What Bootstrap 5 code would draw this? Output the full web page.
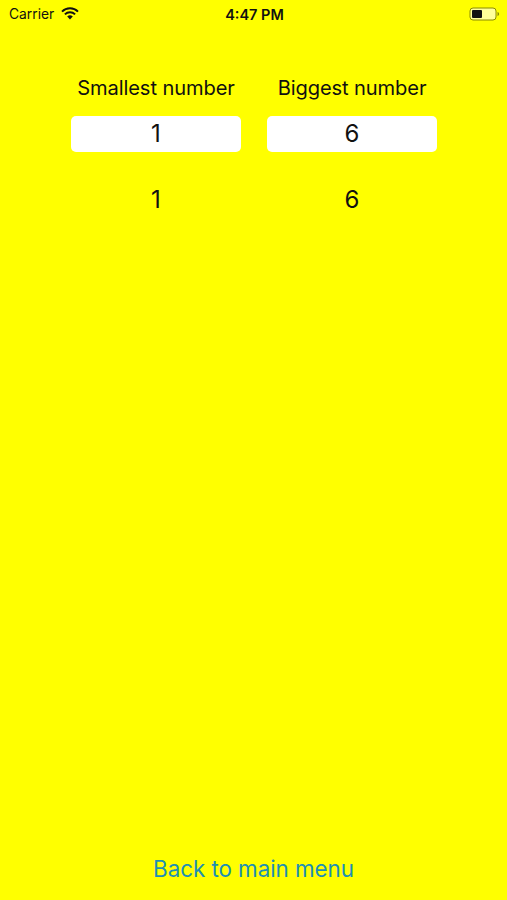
<!DOCTYPE html>
<html lang="en">
<head>
<meta charset="utf-8">
<title>Number range</title>
<link rel="stylesheet" href="https://cdn.jsdelivr.net/npm/bootstrap@5.3.0/dist/css/bootstrap.min.css">
<style>
html, body { margin: 0; height: 900px; overflow: hidden; }
body { background: #ffff00; font-family: Inter, "Liberation Sans", sans-serif; color: #111; }
.screen { height: 900px; }
.status-row { height: 28px; padding: 0 7px 0 9px; font-size: 13.8px; }
.status-side { width: 120px; }
.wifi-icon { margin-left: 3px; margin-top: -2px; }
.status-time { font-weight: 600; font-size: 14.5px; padding-top: 1px; }
.cols { padding: 45px 70px 0 71px; gap: 26px; }
.numcol { width: 170px; }
.cap { font-size: 20.1px; line-height: 30px; white-space: nowrap; letter-spacing: -.1px; }
.numbox { height: 36px; margin-top: 13px; border: 0; border-radius: 5px; background: #fff; color: #111; font-size: 24px; line-height: 36px; padding: 0; text-align: center; box-shadow: none; }
.numout { font-size: 24px; line-height: 36px; margin-top: 30px; }
.backlink { color: #1d8fb4; font-size: 22.4px; line-height: 30px; padding: 0 0 15px; text-decoration: none; letter-spacing: -.05px; }
</style>
</head>
<body>
<div class="screen d-flex flex-column">
  <div class="status-row d-flex align-items-center justify-content-between">
    <div class="status-side d-flex align-items-center gap-1">
      <span>Carrier</span>
      <svg class="wifi-icon" width="18" height="13" viewBox="0 0 18 13" aria-hidden="true"><path d="M1 4.6a11.4 11.4 0 0 1 16 0" fill="none" stroke="#111" stroke-width="2"/><path d="M3.900 7.400a7.300 7.300 0 0 1 10.200 0" fill="none" stroke="#111" stroke-width="2"/><path d="M9 12.400 6.200 9.600a4 4 0 0 1 5.600 0z" fill="#111"/></svg>
    </div>
    <div class="status-time">4:47 PM</div>
    <div class="status-side d-flex justify-content-end">
      <svg width="31" height="14" viewBox="0 0 31 14" aria-hidden="true"><rect x="1" y="1" width="26" height="12" rx="3" fill="#fff" fill-opacity=".6" stroke="#8a8a00" stroke-width="1"/><rect x="3" y="3" width="10" height="8" rx="1" fill="#111"/><path d="M28.500 5v4c1-.3 1.600-1 1.600-2s-.6-1.700-1.600-2z" fill="#8a8a00"/></svg>
    </div>
  </div>
  <div class="cols d-flex">
    <div class="numcol text-center">
      <div class="cap">Smallest number</div>
      <input class="form-control numbox" value="1" aria-label="Smallest number">
      <div class="numout">1</div>
    </div>
    <div class="numcol text-center">
      <div class="cap">Biggest number</div>
      <input class="form-control numbox" value="6" aria-label="Biggest number">
      <div class="numout">6</div>
    </div>
  </div>
  <div class="mt-auto text-center">
    <a class="btn backlink" href="#">Back to main menu</a>
  </div>
</div>
</body>
</html>
